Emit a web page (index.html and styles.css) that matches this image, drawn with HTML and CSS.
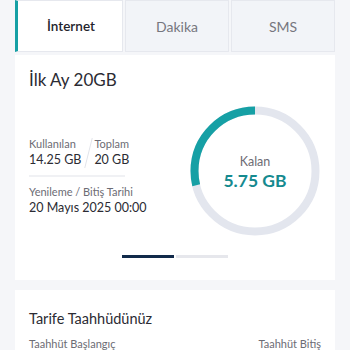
FILE: index.html
```html
<!DOCTYPE html>
<html lang="tr">
<head>
<meta charset="utf-8">
<link rel="stylesheet" href="styles.css">
</head>
<body>
<div class="tabs">
  <div class="tab active">İnternet</div>
  <div class="tab">Dakika</div>
  <div class="tab">SMS</div>
</div>
<div class="card usage">
  <div class="title">İlk Ay 20GB</div>
  <div class="row">
    <div class="info">
      <div class="pair">
        <div class="cell">
          <div class="label">Kullanılan</div>
          <div class="value">14.25 GB</div>
        </div>
        <div class="slash"></div>
        <div class="cell">
          <div class="label">Toplam</div>
          <div class="value">20 GB</div>
        </div>
      </div>
      <div class="sep"></div>
      <div class="label">Yenileme / Bitiş Tarihi</div>
      <div class="value">20 Mayıs 2025 00:00</div>
    </div>
    <div class="ring">
      <svg width="130" height="130" viewBox="0 0 130 130">
        <circle cx="65" cy="65" r="60.5" fill="none" stroke="#e3e6ee" stroke-width="8"/>
        <circle cx="65" cy="65" r="60.5" fill="none" stroke="#16a0a5" stroke-width="8" stroke-dasharray="109.3 400" transform="translate(130 0) scale(-1 1) rotate(-90 65 65)"/>
      </svg>
      <div class="ring-text">
        <div class="ring-label">Kalan</div>
        <div class="ring-value">5.75 GB</div>
      </div>
    </div>
  </div>
  <div class="pager">
    <span class="dot on"></span><span class="dot"></span>
  </div>
</div>
<div class="card commit">
  <div class="title2">Tarife Taahhüdünüz</div>
  <div class="crow">
    <span class="label">Taahhüt Başlangıç</span>
    <span class="label">Taahhüt Bitiş</span>
  </div>
</div>
</body>
</html>
```
FILE: styles.css
```css
* { box-sizing: border-box; }
body {
  margin: 0;
  background: #f5f6f9;
  font-family: Lato, "Noto Sans", sans-serif;
  color: #2b2b33;
}
.tabs {
  display: flex;
  margin: 0 15px;
  height: 52px;
  gap: 2px;
}
.tab {
  flex: 1;
  display: flex;
  align-items: center;
  justify-content: center;
  background: #f2f4f8;
  border: 1px solid #e6e8ee;
  font-size: 14px;
  color: #76767e;
}
.tab.active {
  background: #fff;
  border-left: 3px solid #16a0a5;
  color: #23232b;
  font-weight: 600;
  font-size: 13.5px;
  padding-left: 2px;
}
.card {
  background: #fff;
  margin: 0 15px;
}
.usage {
  margin-top: 3px;
  padding: 13px 15px 0 14px;
  height: 225px;
}
.title {
  font-size: 17px;
  line-height: 24px;
}
.row {
  display: flex;
  justify-content: space-between;
  align-items: center;
  margin-top: 14px;
}
.info {
  padding-top: 10px;
}
.pair {
  display: flex;
  align-items: stretch;
}
.slash {
  width: 1px;
  background: #e2e4ea;
  margin: 2px 5px 0 7px;
  transform: skewX(-14deg);
}
.label {
  font-size: 11px;
  line-height: 15px;
  color: #6c6c74;
}
.value {
  font-size: 12.5px;
  line-height: 17px;
  color: #2b2b33;
}
.sep {
  width: 96px;
  height: 2px;
  background: #f0f1f4;
  margin: 7px 0 7px;
}
.ring {
  position: relative;
  width: 130px;
  height: 130px;
}
.ring svg { display: block; }
.ring-text {
  position: absolute;
  inset: 0;
  display: flex;
  flex-direction: column;
  align-items: center;
  justify-content: center;
  padding-top: 4px;
}
.ring-label {
  font-size: 12.5px;
  color: #6c6c74;
  line-height: 16px;
}
.ring-value {
  font-size: 17.5px;
  font-weight: 700;
  color: #158a8f;
  line-height: 22px;
}
.pager {
  display: flex;
  justify-content: center;
  gap: 2px;
  margin-top: 19px;
}
.dot {
  width: 52px;
  height: 3px;
  background: #e6e7ec;
}
.dot.on { background: #112a4a; }
.commit {
  margin-top: 10px;
  padding: 19px 14px 0 14px;
  height: 80px;
}
.title2 {
  font-size: 14.5px;
  line-height: 20px;
}
.crow {
  display: flex;
  justify-content: space-between;
  margin-top: 7px;
}
```
